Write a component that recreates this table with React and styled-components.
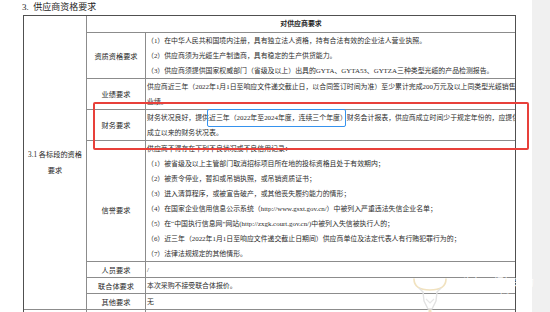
import React from "react";
import styled, { createGlobalStyle } from "styled-components";

const Global = createGlobalStyle`
  html, body { margin: 0; padding: 0; overflow: hidden; background: #fff; }
  body { font-family: "Liberation Serif", "Noto Sans CJK SC", serif; }
`;

const Page = styled.div`
  display: flex;
  width: 550px;
  height: 312px;
  overflow: hidden;
`;

const Sheet = styled.div`
  position: relative;
  flex: none;
  width: 532px;
  background: #fff;
`;

const Side = styled.div`
  flex: 1;
  background: #f0f0f0;
`;

const Title = styled.div`
  height: 15px;
  padding-left: 22px;
  font-size: 9px;
  line-height: 14px;
  color: #1e1e1e;
`;

const Grid = styled.div`
  display: grid;
  grid-template-columns: 62px 58px 369px;
  gap: 1px;
  width: 491px;
  margin-left: 23px;
  border: 1px solid #505050;
  background: #8c8c8c;
`;

const Cell = styled.div`
  background: #fff;
  overflow: hidden;
  font-size: 6.9px;
  color: #2c2c2c;
`;

const Section = styled(Cell)`
  grid-row: 1 / span 8;
  display: flex;
  flex-direction: column;
  justify-content: center;
  align-items: center;
  font-size: 7.2px;
  line-height: 16px;
  color: #1e1e1e;
  white-space: nowrap;
`;

const Head = styled(Cell)`
  grid-column: 2 / span 2;
  line-height: 16px;
  text-align: center;
  font-weight: bold;
  color: #1e1e1e;
`;

const Label = styled(Cell)`
  display: flex;
  align-items: center;
  justify-content: center;
  padding-top: ${(p) => p.$shift || 0}px;
  font-size: 7.2px;
  color: #1e1e1e;
  white-space: nowrap;
`;

const Body = styled(Cell)`
  padding-left: 1px;
`;

const Line = styled.div`
  line-height: 15px;
  white-space: nowrap;
`;

const Spacer = styled(Cell)`
  height: 20px;
`;

const RedMark = styled.div`
  position: absolute;
  left: 93px;
  top: 102px;
  width: 436px;
  height: 48px;
  box-sizing: border-box;
  border: 2px solid #e8403a;
  border-radius: 2px;
  pointer-events: none;
`;

const BlueMark = styled.div`
  position: absolute;
  left: 207px;
  top: 109px;
  width: 139px;
  height: 18px;
  box-sizing: border-box;
  border: 1.5px solid #3592ee;
  border-radius: 2px;
  pointer-events: none;
`;

const Watermark = styled.div`
  position: absolute;
  left: 410px;
  top: 273px;
  width: 40px;
  height: 40px;
  pointer-events: none;
`;

const WaterText = styled.div`
  position: absolute;
  left: ${(p) => p.$x}px;
  top: ${(p) => p.$y}px;
  font-family: "Noto Sans CJK SC", sans-serif;
  font-size: ${(p) => p.$size}px;
  line-height: 1;
  color: rgba(255, 255, 255, 0.92);
  white-space: nowrap;
  pointer-events: none;
`;

const rows = [
  {
    label: "资质资格要求",
    lines: [
      "（1）在中华人民共和国境内注册，具有独立法人资格，持有合法有效的企业法人营业执照。",
      "（2）供应商须为光缆生产制造商，具有稳定的生产供货能力。",
      "（3）供应商须提供国家权威部门（省级及以上）出具的GYTA、GYTA53、GYTZA三种类型光缆的产品检测报告。",
    ],
  },
  {
    label: "业绩要求",
    lines: [
      "供应商近三年（2022年1月1日至响应文件递交截止日，以合同签订时间为准）至少累计完成200万元及以上同类型光缆销售",
      "业绩。",
    ],
  },
  {
    label: "财务要求",
    lines: [
      "财务状况良好，提供近三年（2022年至2024年度，连续三个年度）财务会计报表，供应商成立时间少于规定年份的，应提供",
      "成立以来的财务状况表。",
    ],
  },
  {
    label: "信誉要求",
    shift: 17,
    lines: [
      "供应商不得存在下列不良状况或不良信用记录：",
      "（1）被省级及以上主管部门取消招标项目所在地的投标资格且处于有效期内；",
      "（2）被责令停业，暂扣或吊销执照，或吊销资质证书；",
      "（3）进入清算程序，或被宣告破产，或其他丧失履约能力的情形；",
      "（4）在国家企业信用信息公示系统（http://www.gsxt.gov.cn/）中被列入严重违法失信企业名单；",
      "（5）在“中国执行信息网”网站(http://zxgk.court.gov.cn/)中被列入失信被执行人的；",
      "（6）近三年（2022年1月1日至响应文件递交截止日期间）供应商单位及法定代表人有行贿犯罪行为的；",
      "（7）法律法规规定的其他情形。",
    ],
  },
  { label: "人员要求", lines: ["/"] },
  { label: "联合体要求", lines: ["本次采购不接受联合体报价。"] },
  { label: "其他要求", lines: ["无"] },
];

function Bull() {
  return (
    <svg width="40" height="40" viewBox="0 0 40 40">
      <path
        d="M4 6 C4 14 10 17 20 17 C30 17 36 14 36 6"
        fill="none"
        stroke="#f1e2bf"
        strokeWidth="1.6"
        strokeLinecap="round"
      />
      <path
        d="M9 15 L13 19 L14 28 L18 36 L22 36 L26 28 L27 19 L31 15"
        fill="none"
        stroke="#e2e2e2"
        strokeWidth="1.4"
        strokeLinejoin="round"
      />
      <path d="M16 26 L20 30 L24 26" fill="none" stroke="#e6e6e6" strokeWidth="1.2" />
      <circle cx="20" cy="38" r="1.6" fill="#f1e2bf" />
    </svg>
  );
}

export default function App() {
  return (
    <>
      <Global />
      <Page>
        <Sheet>
          <Title>3.&nbsp;&nbsp;供应商资格要求</Title>
          <Grid>
            <Section>
              <div>3.1 各标段的资格</div>
              <div>要求</div>
            </Section>
            <Head>对供应商要求</Head>
            {rows.map((r) => (
              <React.Fragment key={r.label}>
                <Label $shift={r.shift}>{r.label}</Label>
                <Body>
                  {r.lines.map((l, i) => (
                    <Line key={i}>{l}</Line>
                  ))}
                </Body>
              </React.Fragment>
            ))}
            <Spacer />
            <Spacer />
            <Spacer />
          </Grid>
          <RedMark />
          <BlueMark />
          <Watermark>
            <Bull />
          </Watermark>
          <WaterText $x={462} $y={277} $size={10}>头条 @招标采购</WaterText>
          <WaterText $x={500} $y={292} $size={9}>网</WaterText>
        </Sheet>
        <Side />
      </Page>
    </>
  );
}
